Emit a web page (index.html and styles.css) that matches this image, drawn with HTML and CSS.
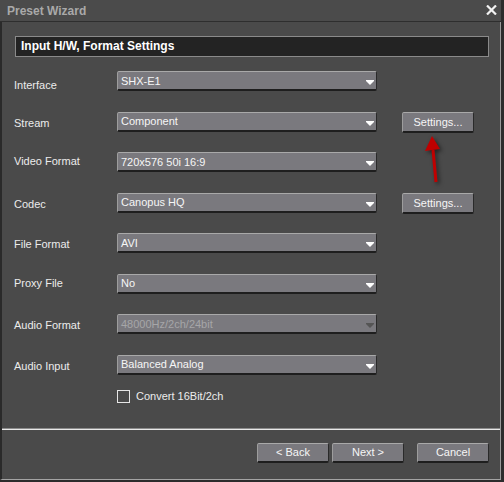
FILE: index.html
```html
<!DOCTYPE html>
<html>
<head>
<meta charset="utf-8">
<link rel="stylesheet" href="styles.css">
</head>
<body>
<div class="window">
  <div class="titlebar">
    <span class="title">Preset Wizard</span>
    <svg class="close" width="11" height="10" viewBox="0 0 11 10"><path d="M1 0.5 L10 9.5 M10 0.5 L1 9.5" stroke="#f2f2f2" stroke-width="2.2" fill="none"/></svg>
  </div>
  <div class="body">
    <div class="section-head">Input H/W, Format Settings</div>
    <div class="form">
      <div class="label low">Interface</div>
      <div class="combo"><span>SHX-E1</span><svg class="arrow" width="8" height="5" viewBox="0 0 8 5"><polygon points="0,0 8,0 8,1 4,5 0,1" fill="#fff"/></svg></div>
      <div></div>

      <div class="label">Stream</div>
      <div class="combo"><span>Component</span><svg class="arrow" width="8" height="5" viewBox="0 0 8 5"><polygon points="0,0 8,0 8,1 4,5 0,1" fill="#fff"/></svg></div>
      <div class="btn">Settings...</div>

      <div class="label high">Video Format</div>
      <div class="combo"><span>720x576 50i 16:9</span><svg class="arrow" width="8" height="5" viewBox="0 0 8 5"><polygon points="0,0 8,0 8,1 4,5 0,1" fill="#fff"/></svg></div>
      <div></div>

      <div class="label">Codec</div>
      <div class="combo"><span>Canopus HQ</span><svg class="arrow" width="8" height="5" viewBox="0 0 8 5"><polygon points="0,0 8,0 8,1 4,5 0,1" fill="#fff"/></svg></div>
      <div class="btn">Settings...</div>

      <div class="label">File Format</div>
      <div class="combo"><span>AVI</span><svg class="arrow" width="8" height="5" viewBox="0 0 8 5"><polygon points="0,0 8,0 8,1 4,5 0,1" fill="#fff"/></svg></div>
      <div></div>

      <div class="label high">Proxy File</div>
      <div class="combo"><span>No</span><svg class="arrow" width="8" height="5" viewBox="0 0 8 5"><polygon points="0,0 8,0 8,1 4,5 0,1" fill="#fff"/></svg></div>
      <div></div>

      <div class="label">Audio Format</div>
      <div class="combo disabled"><span>48000Hz/2ch/24bit</span><svg class="arrow" width="8" height="5" viewBox="0 0 8 5"><polygon points="0,0 8,0 8,1 4,5 0,1" fill="#555"/></svg></div>
      <div></div>

      <div class="label">Audio Input</div>
      <div class="combo"><span>Balanced Analog</span><svg class="arrow" width="8" height="5" viewBox="0 0 8 5"><polygon points="0,0 8,0 8,1 4,5 0,1" fill="#fff"/></svg></div>
      <div></div>

      <div></div>
      <label class="check"><span class="box"></span><span>Convert 16Bit/2ch</span></label>
      <div></div>
    </div>
    <div class="footer">
      <div class="btn">&lt; Back</div>
      <div class="btn">Next &gt;</div>
      <div class="btn cancel">Cancel</div>
    </div>
  </div>
  <svg class="annotation" width="30" height="56" viewBox="0 0 30 56">
    <path d="M10 14 L13 46" stroke="#c00000" stroke-width="3" fill="none"/>
    <polygon points="9,0 2,15 17,13" fill="#c00000"/>
  </svg>
</div>
</body>
</html>
```

FILE: styles.css
```css
html, body {
  margin: 0;
  padding: 0;
  background: #4a4a4a;
}

.window {
  position: relative;
  width: 504px;
  height: 482px;
  box-sizing: border-box;
  border-right: 3px solid #2c2c2c;
  border-bottom: 2px solid #2c2c2c;
  background: #4a4a4a;
  display: flex;
  flex-direction: column;
  font-family: "Liberation Sans", Arial, sans-serif;
  font-size: 11px;
  color: #ececec;
}

.titlebar {
  height: 21px;
  flex: none;
  border-bottom: 1px solid #2e2e2e;
  background: #4b4b4b;
  display: flex;
  align-items: center;
  justify-content: space-between;
  padding: 0 4px 0 7px;
}

.title {
  font-weight: bold;
  font-size: 12px;
  color: #a9a9a9;
}

.close {
  display: block;
  margin-top: -1px;
}

.body {
  flex: 1;
  display: flex;
  flex-direction: column;
  border-left: 2px solid #2a2a2a;
  border-right: 1px solid #9a9a9a;
  border-bottom: 1px solid #a4a4a4;
}

.section-head {
  margin: 14px 0 0 13px;
  height: 19px;
  width: 467px;
  border: 1px solid #8a8a8a;
  background: #232323;
  color: #ffffff;
  font-weight: bold;
  font-size: 12px;
  line-height: 19px;
  padding-left: 5px;
}

.form {
  margin: 14px 0 0 12px;
  display: grid;
  grid-template-columns: 103px 260px 97px;
  grid-template-rows: repeat(7, 40.5px) 35px 13px;
}

.label {
  padding-top: 5px;
  line-height: 13px;
  color: #ececec;
}

.label.low {
  padding-top: 8px;
}

.label.high {
  padding-top: 3px;
}

.combo {
  height: 17px;
  border-top: 1px solid #a9a9a9;
  border-left: 1px solid #9d9d9d;
  border-right: 1px solid #2a2a2a;
  border-bottom: 2px solid #1e1e1e;
  border-radius: 2px;
  background: #7a797e;
  display: flex;
  align-items: center;
  justify-content: space-between;
  padding: 0 2px 0 3px;
  color: #f6f6f6;
  line-height: 17px;
  align-self: start;
}

.combo span {
  padding-top: 1px;
}

.combo .arrow {
  display: block;
  margin-top: 4px;
}

.combo.disabled {
  color: #a6a6a8;
}

.btn {
  height: 18px;
  width: 70px;
  border-top: 1px solid #a9a9a9;
  border-left: 1px solid #9d9d9d;
  border-right: 1px solid #2a2a2a;
  border-bottom: 2px solid #1e1e1e;
  border-radius: 2px;
  background: #7a797e;
  color: #f6f6f6;
  text-align: center;
  line-height: 18px;
  align-self: start;
  justify-self: end;
}

.check {
  display: flex;
  align-items: center;
  gap: 6px;
  color: #ececec;
  line-height: 13px;
}

.check .box {
  width: 11px;
  height: 11px;
  border: 1px solid #e6e6e6;
  flex: none;
}

.footer {
  margin-top: auto;
  border-top: 1px solid #8c8c8c;
  box-shadow: inset 0 1px 0 #e8e8e8;
  padding: 14px 11px 16px 0;
  display: flex;
  justify-content: flex-end;
  gap: 3px;
}

.footer .btn {
  height: 17px;
  line-height: 17px;
}

.footer .cancel {
  margin-left: 10px;
}

.annotation {
  position: absolute;
  left: 423px;
  top: 136px;
  filter: drop-shadow(2px 2px 2px rgba(0, 0, 0, 0.55));
}
```
